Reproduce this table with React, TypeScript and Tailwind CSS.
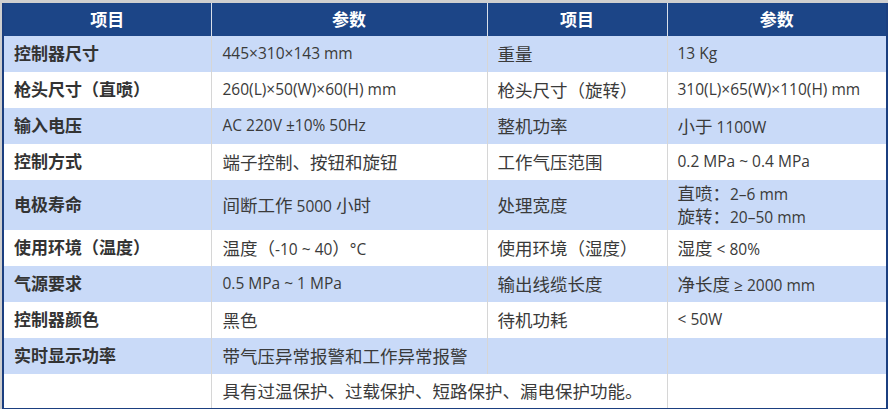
import React from 'react';

type Row = {
    label: string;
    value: React.ReactNode;
    label2?: string;
    value2?: React.ReactNode;
    span?: boolean;
    tall?: boolean;
};

// CJK glyphs in the screenshot render larger than the Latin ones
const cjk = /([\u3000-\u303f\u4e00-\u9fff\uff00-\uffef]+)/;

function T({ text, bold }: { text: string; bold?: boolean }) {
    return (
        <>
            {text.split(cjk).map((part, i) =>
                i % 2 === 1 ? (
                    <span key={i} className={bold ? 'text-[17px]' : 'text-[17.5px]'}>{part}</span>
                ) : (
                    <span key={i}>{part}</span>
                )
            )}
        </>
    );
}

const rows: Row[] = [
    { label: '控制器尺寸', value: '445×310×143 mm', label2: '重量', value2: '13 Kg' },
    { label: '枪头尺寸（直喷）', value: '260(L)×50(W)×60(H) mm', label2: '枪头尺寸（旋转）', value2: '310(L)×65(W)×110(H) mm' },
    { label: '输入电压', value: 'AC 220V ±10% 50Hz', label2: '整机功率', value2: '小于 1100W' },
    { label: '控制方式', value: '端子控制、按钮和旋钮', label2: '工作气压范围', value2: '0.2 MPa ~ 0.4 MPa' },
    {
        label: '电极寿命',
        value: '间断工作 5000 小时',
        label2: '处理宽度',
        value2: (
            <div className="leading-[22px]">
                <div><T text="直喷：2–6 mm" /></div>
                <div><T text="旋转：20–50 mm" /></div>
            </div>
        ),
        tall: true,
    },
    { label: '使用环境（温度）', value: '温度（-10 ~ 40）°C', label2: '使用环境（湿度）', value2: '湿度 < 80%' },
    { label: '气源要求', value: '0.5 MPa ~ 1 MPa', label2: '输出线缆长度', value2: '净长度 ≥ 2000 mm' },
    { label: '控制器颜色', value: '黑色', label2: '待机功耗', value2: '< 50W' },
    { label: '实时显示功率', value: '带气压异常报警和工作异常报警', label2: '', value2: '' },
    { label: '', value: '具有过温保护、过载保护、短路保护、漏电保护功能。', span: true, value2: '' },
];

const cell = (v: React.ReactNode) => (typeof v === 'string' ? <T text={v} /> : v);

export default function App() {
    return (
        <div
            className="w-[888px] h-[409px] bg-[#cfcfcf] pt-[3px] pl-[2px] overflow-hidden"
            style={{ fontFamily: '"Open Sans", "Noto Sans CJK SC", sans-serif' }}
        >
            <table className="w-[886px] table-fixed border-collapse bg-white border-l-2 border-r-2 border-b-2 border-[#1b3f80] text-[15.5px] text-[#3a3a3a]">
                <colgroup>
                    <col className="w-[208px]" />
                    <col className="w-[276px]" />
                    <col className="w-[180px]" />
                    <col className="w-[220px]" />
                </colgroup>
                <thead>
                    <tr className="h-[33px] bg-[#1c4587] text-white font-bold">
                        <th className="border-r border-[#d8dfea] text-center"><T text="项目" bold /></th>
                        <th className="border-r border-[#d8dfea] text-center"><T text="参数" bold /></th>
                        <th className="border-r border-[#d8dfea] text-center"><T text="项目" bold /></th>
                        <th className="text-center"><T text="参数" bold /></th>
                    </tr>
                </thead>
                <tbody>
                    {rows.map((r, i) => (
                        <tr
                            key={i}
                            className={`${r.tall ? 'h-[50px]' : i === rows.length - 1 ? 'h-[35px]' : 'h-[36px]'} ${i % 2 === 0 ? 'bg-[#c9daf8]' : 'bg-white'}`}
                        >
                            <td className="border-r border-[#d6d6d6] pl-[10px] font-bold text-[#333] whitespace-nowrap">
                                <T text={r.label} bold />
                            </td>
                            {r.span ? (
                                <td colSpan={2} className="border-r border-[#d6d6d6] pl-[11px] whitespace-nowrap">{cell(r.value)}</td>
                            ) : (
                                <>
                                    <td className="border-r border-[#d6d6d6] pl-[11px] whitespace-nowrap">{cell(r.value)}</td>
                                    <td className="border-r border-[#d6d6d6] pl-[10px] whitespace-nowrap">{cell(r.label2)}</td>
                                </>
                            )}
                            <td className="pl-[10px] whitespace-nowrap">{cell(r.value2)}</td>
                        </tr>
                    ))}
                </tbody>
            </table>
        </div>
    );
}
